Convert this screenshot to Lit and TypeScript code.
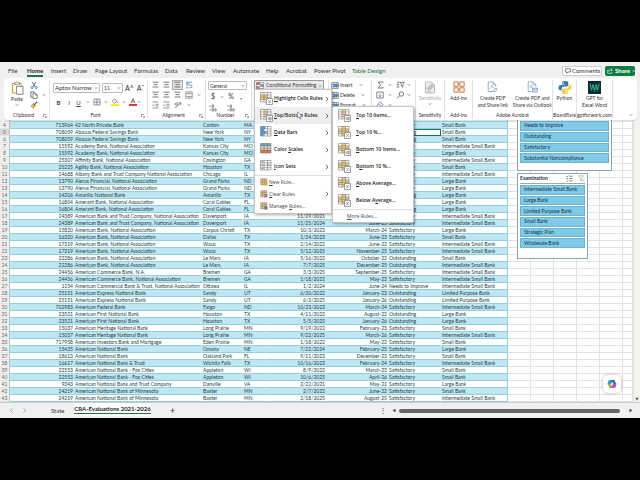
import { LitElement, html, css, svg, nothing, TemplateResult } from "lit";
import { customElement } from "lit/decorators.js";
import { classMap } from "lit/directives/class-map.js";

type Row = [string, string, string, string, string, string, string, string];

const I = "Intermediate Small Bank";
const L = "Large Bank";
const S = "Small Bank";
const P = "Limited Purpose Bank";
const SAT = "Satisfactory";
const OUT = "Outstanding";

const FIRST_ROW = 3;
const ROWS: Row[] = [
  ["8709", "1st Summit Bank", "Johnstown", "PA", "", "", SAT, S],
  ["713964", "42 North Private Bank", "Canton", "MA", "", "", SAT, S],
  ["708059", "Abacus Federal Savings Bank", "New York", "NY", "", "", OUT, S],
  ["708059", "Abacus Federal Savings Bank", "New York", "NY", "", "", OUT, S],
  ["15592", "Academy Bank, National Association", "Kansas City", "MO", "", "", SAT, I],
  ["15592", "Academy Bank, National Association", "Kansas City", "MO", "", "", SAT, L],
  ["25307", "Affinity Bank, National Association", "Covington", "GA", "", "", SAT, I],
  ["25225", "Agility Bank, National Association", "Houston", "TX", "", "", SAT, S],
  ["14688", "Albany Bank and Trust Company National Association", "Chicago", "IL", "", "", SAT, I],
  ["13790", "Alerus Financial, National Association", "Grand Forks", "ND", "", "", SAT, L],
  ["13790", "Alerus Financial, National Association", "Grand Forks", "ND", "", "", SAT, L],
  ["14206", "Amarillo National Bank", "Amarillo", "TX", "", "", OUT, L],
  ["16804", "Amerant Bank, National Association", "Coral Gables", "FL", "", "", SAT, L],
  ["16804", "Amerant Bank, National Association", "Coral Gables", "FL", "", "", OUT, L],
  ["24389", "American Bank and Trust Company, National Association", "Davenport", "IA", "11/29/2021", "", SAT, I],
  ["24389", "American Bank and Trust Company, National Association", "Davenport", "IA", "11/25/2024", "June-25", SAT, I],
  ["15820", "American Bank, National Association", "Corpus Christi", "TX", "10/3/2023", "March-24", SAT, L],
  ["16320", "American Bank, National Association", "Dallas", "TX", "1/24/2023", "June-23", SAT, S],
  ["17319", "American Bank, National Association", "Waco", "TX", "2/14/2022", "June-22", SAT, I],
  ["17319", "American Bank, National Association", "Waco", "TX", "5/12/2025", "November-25", SAT, I],
  ["22286", "American Bank, National Association", "Le Mars", "IA", "5/16/2022", "October-22", OUT, S],
  ["22286", "American Bank, National Association", "Le Mars", "IA", "7/7/2025", "December-25", OUT, I],
  ["24456", "American Commerce Bank, N.A.", "Bremen", "GA", "3/3/2025", "September-25", SAT, I],
  ["24456", "American Commerce Bank, National Association", "Bremen", "GA", "1/18/2022", "May-22", SAT, I],
  ["1154", "American Commercial Bank & Trust, National Association", "Ottawa", "IL", "1/2/2024", "June-24", "Needs to Improve", I],
  ["25151", "American Express National Bank", "Sandy", "UT", "6/20/2022", "January-23", OUT, P],
  ["25151", "American Express National Bank", "Sandy", "UT", "6/2/2025", "January-26", OUT, P],
  ["702983", "American Federal Bank", "Fargo", "ND", "10/23/2023", "March-24", SAT, I],
  ["23521", "American First National Bank", "Houston", "TX", "4/11/2022", "August-22", OUT, L],
  ["23521", "American First National Bank", "Houston", "TX", "5/5/2025", "January-26", OUT, L],
  ["15037", "American Heritage National Bank", "Long Prairie", "MN", "9/19/2022", "February-23", SAT, S],
  ["15037", "American Heritage National Bank", "Long Prairie", "MN", "9/22/2025", "March-26", SAT, I],
  ["717958", "American Investors Bank and Mortgage", "Eden Prairie", "MN", "1/18/2022", "May-22", SAT, S],
  ["15435", "American National Bank", "Omaha", "NE", "7/22/2024", "February-25", SAT, L],
  ["18613", "American National Bank", "Oakland Park", "FL", "9/11/2023", "December-23", SAT, S],
  ["16617", "American National Bank & Trust", "Wichita Falls", "TX", "10/16/2023", "February-24", SAT, I],
  ["22553", "American National Bank - Fox Cities", "Appleton", "WI", "8/9/2022", "March-23", SAT, S],
  ["22553", "American National Bank - Fox Cities", "Appleton", "WI", "10/6/2025", "April-26", SAT, S],
  ["9343", "American National Bank and Trust Company", "Danville", "VA", "2/22/2021", "May-21", SAT, L],
  ["24219", "American National Bank of Minnesota", "Baxter", "MN", "2/7/2022", "June-22", SAT, S],
  ["24219", "American National Bank of Minnesota", "Baxter", "MN", "2/18/2025", "August-25", SAT, I],
];

const TABS = ["File", "Home", "Insert", "Draw", "Page Layout", "Formulas", "Data", "Review", "View", "Automate", "Help", "Acrobat", "Power Pivot", "Table Design"];

/* ---------- icons ---------- */
const icon = (w: number, h: number, body: unknown, cls = "") =>
  html`<svg class="ic ${cls}" width=${w} height=${h} viewBox="0 0 ${w} ${h}" fill="none" aria-hidden="true">${body}</svg>`;

const chev = () => icon(4, 4, svg`<path d="M.8 1.3 2 2.6 3.2 1.3" stroke="#666" stroke-width=".7"/>`);
const launcher = () => icon(4, 4, svg`<path d="M.5 3V.5H3M1.8 1.8 3.5 3.5M3.6 2v1.6H2" stroke="#666" stroke-width=".6"/>`);
const arrow = () => icon(4, 6, svg`<path d="M1 .8 3 3 1 5.2" stroke="#444" stroke-width=".8"/>`, "arrow");

const paste = icon(13, 14, svg`<path d="M4 2.5H1.5v9.5H5M8 2.5h2.2V5" stroke="#e0a030" stroke-width="1.1"/><path d="M3.5 3.4V1.6h1.3a1.2 1.2 0 0 1 2.3 0h1.3v1.8z" fill="#fff" stroke="#666" stroke-width=".7"/><path d="M5.6 5.4h6.4v7.9H5.6z" fill="#fff" stroke="#666" stroke-width=".8"/>`);
const cut = icon(8, 8, svg`<path d="M2.2.8 5.2 5.6M5.8.8 2.8 5.6" stroke="#555" stroke-width=".8"/><circle cx="2" cy="6.4" r="1.1" stroke="#2b7cc0" stroke-width=".8"/><circle cx="6" cy="6.4" r="1.1" stroke="#2b7cc0" stroke-width=".8"/>`);
const copy = icon(8, 8, svg`<path d="M2.6 6.2H.9V.8h3.3v1" stroke="#555" stroke-width=".8"/><path d="M3 2.2h2.6l1.6 1.6v3.6H3zM5.4 2.3v1.7h1.7" stroke="#555" stroke-width=".7"/>`);
const brush = icon(8, 8, svg`<path d="M7 .8 4.8 3.2" stroke="#555" stroke-width="1.2"/><path d="M3.4 2.4 5.6 4.6" stroke="#444" stroke-width="1"/><path d="M3 3 .8 5.2 3.4 7.4 5.2 5z" fill="#eab04a" stroke="#b97f1d" stroke-width=".5"/>`);
const border = icon(8, 8, svg`<path d="M1 1h6v6H1zM4 1v6M1 4h6" stroke="#666" stroke-width=".7"/>`);
const fill = icon(8, 8, svg`<path d="M3.5.8 6 3.3 3.6 5.2 1.4 3.2z" stroke="#555" stroke-width=".7"/><path d="M6.8 3.6v1" stroke="#2b7cc0" stroke-width=".8"/><path d="M0 6h8v2H0z" fill="#f6ef1c"/>`);
const fontColor = icon(8, 8, svg`<path d="M2 5.2 4 .6 6 5.2M2.8 3.7h2.4" stroke="#555" stroke-width=".8"/><path d="M0 6h8v2H0z" fill="#d93636"/>`);
const lines = (a: number[], c = "#555") => icon(7, 8, svg`${a.map((w, i) => svg`<path d="M${(7 - w) / 2} ${1.2 + i * 2.4}h${w}" stroke=${c} stroke-width=".8"/>`)}`);
const indent = icon(7, 8, svg`<path d="M.5 1h6M3.5 3.3h3M3.5 5h3M.5 7h6" stroke="#666" stroke-width=".7"/><path d="M.5 4.2h2" stroke="#2b7cc0" stroke-width=".8"/>`);
const wrap = icon(8, 8, svg`<path d="M1 1.2h6M1 6.8h2.4M1 4h4.6a1.3 1.3 0 0 1 0 2.7H4.6" stroke="#3a88a8" stroke-width=".8"/><path d="M1 2.6h3" stroke="#666" stroke-width=".6"/>`);
const merge = icon(8, 8, svg`<path d="M.8.8h6.4v6.4H.8zM.8 2.6h6.4M.8 5.4h6.4M4 .8v1.8M4 5.4v1.8" stroke="#666" stroke-width=".6"/>`);
const orient = icon(8, 8, svg`<path d="M1 7 6.6 2M6.8 4V1.8H4.6" stroke="#555" stroke-width=".7"/><circle cx="2.4" cy="3" r="1.2" stroke="#555" stroke-width=".7"/>`);
const decimals = icon(8, 8, svg`<path d="M1 1.2v2M3 1h1.6v2.4H3zM3 4.8h1.6v2.2H3zM5.8 4.8h1.4v2.2H5.8z" stroke="#555" stroke-width=".6"/><path d="M.6 5.9h1.6" stroke="#2b7cc0" stroke-width=".8"/>`);
const cells = icon(8, 7, svg`<path d="M.6.6h6.8v5.8H.6zM.6 2.5h6.8M.6 4.5h6.8M3 .6v5.8M5.3.6v5.8" stroke="#555" stroke-width=".6"/><path d="M2.5 2.4h5v2.2h-5z" fill="#3a93cf"/>`);
const sigma = icon(7, 8, svg`<path d="M6 1.8V1H1.2L3.6 4 1.2 7H6v-.9" stroke="#555" stroke-width=".8"/>`);
const fillDown = icon(8, 8, svg`<path d="M.8 1h6.4v6H.8z" stroke="#555" stroke-width=".7"/><path d="M4 2.2v3.4M2.7 4.4 4 5.8l1.3-1.4" stroke="#2b7cc0" stroke-width=".7"/>`);
const eraser = icon(8, 8, svg`<path d="M4.4 1 7 3.6 3.8 6.8H2.6L.9 5z" stroke="#9c4fb5" stroke-width=".8"/><path d="M2.5 3 5 5.5" stroke="#9c4fb5" stroke-width=".7"/>`);
const sort = icon(9, 8, svg`<path d="M.8 1h2.4L.8 3.6h2.4M1 6.9 2 4.6l1 2.3" stroke="#555" stroke-width=".6"/><path d="M4 1.4h4.4L6.8 3.4v2.8l-1.2-.8v-2z" stroke="#555" stroke-width=".7"/>`);
const find = icon(9, 8, svg`<circle cx="5.4" cy="3" r="2.2" stroke="#555" stroke-width=".8"/><path d="M3.7 4.6 1.2 7.2" stroke="#555" stroke-width=".9"/>`);
const condIcon = icon(8, 7, svg`<path d="M.5.5h7v6h-7z" fill="#fff" stroke="#777" stroke-width=".6"/><path d="M.6.6h3.2v2H.6zM.6 4.4h2.2v2H.6z" fill="#d9534f"/><path d="M4.6 2.6h2.8v1.8H4.6z" fill="#4a93cf"/><path d="M.5 2.5h7M.5 4.5h7M4 .5v6" stroke="#777" stroke-width=".5"/>`);
const sensitivity = icon(12, 13, svg`<path d="M1.5 1h6l3 3v8h-9z" fill="#eee" stroke="#b5b5b5" stroke-width=".9"/><path d="M3 7.5 7.8 2.6l2.2 2.2-4.8 5z" fill="#c4c4c4" stroke="#a5a5a5" stroke-width=".5"/><path d="M2.6 11h5" stroke="#b5b5b5" stroke-width=".8"/>`);
const addins = icon(12, 13, svg`<path d="M.9.9h4.4v4.4H.9zM6.8.9h4.4v4.4H6.800zM.9 6.8h4.4v4.4H.9zM6.8 6.8h4.4v4.4H6.8z" fill="#fdf4ee" stroke="#c8703f" stroke-width=".9"/>`);
const pdfLink = icon(11, 13, svg`<path d="M6.6 10.5H1.2V1h5l2.6 2.6v2M6 1.2v2.6h2.6" stroke="#7d9cb8" stroke-width=".8"/><path d="M3 7.5c1.6-1.6 2-3 1.6-3.2s-.6 1.6 2.6 2.6" stroke="#7d9cb8" stroke-width=".6"/><path d="M6.5 9.5 9 7l1.3 1.3-2.6 2.6z" stroke="#5b8db8" stroke-width=".7"/>`);
const pdfMail = icon(11, 13, svg`<path d="M4.8 10.5H1.2V1h5l2.6 2.6v2.2M6 1.2v2.6h2.6" stroke="#7d9cb8" stroke-width=".8"/><circle cx="4" cy="5.4" r="1.2" stroke="#7d9cb8" stroke-width=".6"/><path d="M5.6 7.2h4.8v3.8H5.6zM5.6 7.3l2.4 2 2.4-2" fill="#eef5fb" stroke="#5b8db8" stroke-width=".7"/>`);
const python = icon(14, 13, svg`<path d="M7 0C4.3 0 4.2 1 4.2 1.800V3.500h3v.6H2.800C1.300 4.100.5 5 .5 6.700s.8 2.500 1.800 2.500h1.400V7.500c0-1.200.9-2 2-2h2.900c1 0 1.700-.8 1.700-1.700v-2C10.300.7 9.300 0 7 0z" fill="#3776ab"/><path d="M7.200 13c2.700 0 2.800-1 2.800-1.800V9.500H7v-.6h4.400c1.500 0 2.200-.9 2.200-2.600s-.8-2.500-1.800-2.500h-1.300v1.700c0 1.200-.9 2-2 2H5.600c-1 0-1.700.8-1.700 1.700v2c0 1.100 1 1.800 3.300 1.800z" fill="#f7cf45"/><circle cx="5.500" cy="1.800" r=".6" fill="#fff"/><circle cx="8.700" cy="11.200" r=".6" fill="#fff"/>`);
const gpt = icon(13, 13, svg`<path d="M0 0h13v13H0z" fill="#0b2c33"/><path d="M2 2.500 3.600 9 5 3.500l1.600 6L8.200 3.500 9.600 9l1.600-6.500" stroke="#2fc79a" stroke-width=".9"/><path d="M2.500 5 4 10.500M5.200 5.500l1.500 5.500M8.200 6l1 4.500" stroke="#1c8f86" stroke-width=".7"/>`);
const comment = icon(6, 6, svg`<path d="M.6.8h4.800v3.200H2.800L1.600 5.300V4H.6z" stroke="#333" stroke-width=".6"/>`);
const share = icon(6, 6, svg`<path d="M2 2.200H.7v3.100h4V4M2 3.800C2 2.400 3 1.800 5 1.800M3.800.6 5.200 1.800 3.800 3" stroke="#fff" stroke-width=".6"/>`);

const GRID = "M.5.5h10.500v9.500H.5zM.5 2.900h10.500M.5 5.300h10.500M.5 7.700h10.500M4 .5v9.500M7.500.5v9.500";
const tableIcon = (inner: unknown, badge?: unknown) =>
  icon(13, 13, svg`<path d="M.5.5h10.500v9.500H.5z" fill="#fff"/>${inner}<path d=${GRID} stroke="#777" stroke-width=".6"/>${
    badge ? svg`<path d="M6.500 6.500h6v6h-6z" fill="#fff" stroke="#777" stroke-width=".7"/>${badge}` : nothing}`);
const amber = (d: string) => svg`<path d=${d} fill="#f5cd78"/>`;
const ten = svg`<path d="M8.200 8.300v2.600M9.700 8.300h1.400v2.600H9.700z" stroke="#555" stroke-width=".6"/>`;
const pct = svg`<path d="M11 8 8.200 11.200M8.100 8.400h.8M10.400 10.800h.8" stroke="#555" stroke-width=".6"/>`;
const avg = svg`<path d="m8.300 8.200 2.400 2.800M10.900 8.200 8.300 11.200" stroke="#555" stroke-width=".6"/>`;
const UP = "M3.200 3.200 5.700.8 8.300 3.200H7v5H4.500v-5z";
const ALL = "M.5 2.900h3.500v4.800H.5zM4 .5h3.500v9.500H4zM7.500 2.900H11v3H7.500z";

const small = (c: string) => icon(8, 8, svg`<path d="M.8.800h6v6h-6z" fill="#fbe2b0"/><path d="M.8.800h6v6h-6zM.8 2.800h6M.8 4.800h6M2.800.800v6M4.800.800v6" stroke="#8a6f4c" stroke-width=".6"/><path d="M4.400 4.400h3v3h-3z" fill=${c}/>`);

/* A label whose letter at index k carries the access-key underline. */
const key = (t: string, k: number): TemplateResult => html`<span>${t.slice(0, k)}<u>${t[k]}</u>${t.slice(k + 1)}</span>`;

@customElement("app-root")
export class AppRoot extends LitElement {
  static styles = css`
    :host {
      display: flex;
      flex-direction: column;
      min-height: 100vh;
      box-sizing: border-box;
      padding: 62px 0;
      background: #000;
      color: #333;
      font: 6px/8px "Open Sans", "Noto Sans", sans-serif;
      overflow: hidden;
    }
    * { box-sizing: border-box; }
    button, select, input {
      font: inherit;
      color: inherit;
      background: none;
      border: 0;
      padding: 0;
      margin: 0;
      border-radius: 0;
      appearance: none;
      white-space: nowrap;
    }
    .ic { display: block; flex: none; }
    .row { display: flex; align-items: center; }
    .window { flex: 1; display: flex; flex-direction: column; background: #f0f0f0; position: relative; }

    .tabs { display: flex; align-items: center; height: 16px; padding: 2px 5px 0 8px; font-family: Lato, sans-serif; }
    .tablist { display: grid; flex: 1; grid-template-columns: 19px 24px 22px 22px 39px 31px 21px 26px 21px 33px 20px 28px 38px 1fr; }
    .tab { text-align: left; height: 11px; justify-self: start; border-bottom: 2px solid transparent; line-height: 9px; }
    .tab.on { font-weight: 700; border-color: #217346; color: #222; }
    .tab.ctx { color: #217346; }
    .pill { display: flex; align-items: center; gap: 1px; height: 10px; border-radius: 2px; padding: 0 2px; }
    .comments { background: #fff; border: 1px solid #ccc; width: 40px; margin-right: 3px; }
    .share { background: #107c41; color: #fff; font-weight: 700; width: 30px; gap: 2px; }

    .ribbon {
      display: grid;
      grid-template-columns: 46px 98px 58px 46px 77px 43px 44px 29px 28px 80px 24px 36px 1fr;
      height: 42px;
      margin: 0 3px 0 4px;
      background: #fff;
      border-radius: 4px;
      font: 5px/7px Lato, sans-serif;
      position: relative;
      z-index: 2;
      box-shadow: 0 1px 1px #0002;
    }
    .group { display: flex; flex-direction: column; border-right: 1px solid #e2e2e2; margin-top: 2px; min-width: 0; height: 39px; }
    .group:last-child { border: 0; }
    .body { height: 32px; display: flex; }
    .label { display: flex; justify-content: center; align-items: center; height: 7px; white-space: nowrap; }
    .label > span { flex: 1; text-align: center; }
    .label .ic { margin-right: 2px; }
    .big { display: flex; flex-direction: column; align-items: center; flex: 1; line-height: 7px; white-space: nowrap; text-align: center; padding-top: 1px; }
    .big .ic:first-child { margin-bottom: 1px; }
    .big.off { color: #aaa; }
    .stack { display: grid; grid-auto-rows: 10px; align-items: center; }
    .paste { flex: none; width: 26px; }
    .clip { flex: 1; grid-template-columns: 12px 1fr; }
    .font { flex: 1; display: flex; flex-direction: column; gap: 4px; padding: 3px 6px 0 3px; }
    .fields { gap: 2px; }
    .box { display: flex; align-items: center; border: 1px solid #bbb; border-radius: 1px; height: 10px; background: #fff; padding: 0 1px; }
    .box select { flex: 1; min-width: 0; width: 0; height: 8px; line-height: 8px; }
    .box.face { width: 47px; font-size: 6px; }
    .box.size { width: 21px; }
    .box.format { width: 39px; height: 9px; }
    .grow { font-size: 7px; width: 9px; }
    .fmt { display: grid; grid-template-columns: 11px 10px 9px 9px 9px 9px 9px 9px 9px 4px; align-items: center; justify-items: center; height: 10px; font-size: 6px; }
    .align { flex: 1; grid-template-columns: 11px 11px 11px 11px 1fr; padding: 0 2px; justify-items: center; }
    .hot { background: #e2e2e2; border: 1px solid #aaa; padding: 0 1px; }
    .num { padding: 1px 2px 0; flex: 1; display: flex; flex-direction: column; gap: 2px; }
    .nums { display: grid; grid-template-columns: 10px 8px 10px 10px; align-items: center; justify-items: center; height: 9px; font-size: 7px; }
    .styles { padding: 0 2px; flex: 1; }
    .cond { display: flex; align-items: center; gap: 2px; height: 11px; width: 70px; border: 1px solid #999; border-radius: 1px; background: #e9e9e9; padding: 0 1px; }
    .cell { display: flex; align-items: center; gap: 1px; }
    .cell .ic:last-child { margin-left: 5px; }
    .cellpad { padding-left: 2px; }
    .edit { grid-template-columns: 10px 10px 11px 6px; padding-left: 3px; align-items: center; justify-items: center; }
    .collapse { display: flex; align-items: flex-end; justify-content: flex-end; padding: 0 4px 3px; }

    .sheet { display: flex; flex: 1; overflow: hidden; position: relative; background: #fff; }
    .grid { flex: 1; overflow: hidden; height: 282px; }
    table { border-collapse: separate; border-spacing: 0; table-layout: fixed; width: 100%; margin-top: -5px; font: 5px/6px Lato, sans-serif; color: #2a3a3f; }
    td, th { height: 7px; padding: 0 1px; white-space: nowrap; border-bottom: 1px solid #e3e3e3; border-right: 1px solid #e3e3e3; font-weight: 400; }
    th { background: #f0f0f0; color: #666; text-align: center; padding: 0; border-right-color: #bbb; }
    th.cur { background: #d8d8d8; }
    td.d { border-bottom-color: #8fd0df; border-right-color: transparent; }
    tr.band td.d { background: #bee7f2; }
    td.n { text-align: right; padding-right: 0; }
    td.end { border-right-color: #8fd0df; }
    td.sel { outline: 1px solid #217346; outline-offset: -1px; }
    .c0 { width: 10px; } .c1 { width: 64px; } .c2 { width: 128px; } .c3 { width: 41px; } .c4 { width: 23px; }
    .c5 { width: 60px; } .c6 { width: 62px; } .c7 { width: 53px; } .c8 { width: 67px; } .c9 { width: 23px; }
    .vscroll { width: 7px; background: #f2f4f0; display: flex; align-items: flex-end; justify-content: center; border-left: 1px solid #e3e3e3; padding-bottom: 1px; }

    .slicer { position: absolute; left: 517px; background: #fff; border: 1px solid #8fa3ab; padding: 0 2px; font: 5px/9px Lato, sans-serif; color: #173039; }
    .rating { top: -10px; width: 95px; height: 61px; padding-top: 10px; }
    .exam { top: 53px; width: 71px; height: 86px; }
    .shead { display: flex; align-items: center; gap: 5px; height: 10px; border-bottom: 1px solid #9aa; margin-bottom: 1px; font-weight: 700; }
    .shead span { flex: 1; }
    .opts { display: grid; grid-auto-rows: 1fr; gap: 1px; }
    .rating .opts { height: 42px; }
    .exam .opts { height: 63px; }
    .opt { background: #80cae9; border: 1px solid #6bb3d0; text-align: left; padding-left: 3px; line-height: 7px; }
    .copilot { position: absolute; right: 19px; bottom: 9px; width: 18px; height: 18px; display: grid; place-items: center; background: #fff; border-radius: 5px; box-shadow: 0 0 3px #0005; }

    .foot { display: flex; align-items: center; height: 16px; border-top: 1px solid #ccc; font: 6px/9px Lato, sans-serif; padding-right: 7px; }
    .nav { display: flex; gap: 8px; padding-left: 9px; width: 51px; }
    .sheettab { width: 23px; text-align: left; }
    .sheettab.on { width: 77px; padding: 0 3px; background: #fff; height: 13px; font-weight: 700; color: #222; margin-right: 18px; display: flex; justify-content: center; align-self: flex-start; }
    .sheettab.on span { border-bottom: 1px solid #217346; height: 11px; line-height: 11px; }
    .plus { font-size: 9px; width: 7px; }
    .dots { margin-left: auto; padding: 0 5px 0 0; font-size: 8px; }
    .hscroll { display: flex; align-items: center; gap: 3px; width: 38%; }
    .thumb { flex: 1; height: 4px; border-radius: 2px; background: #666; margin-right: 6px; }

    .menu { position: absolute; z-index: 3; background: #fff; border: 1px solid #c4c4c4; box-shadow: 1px 1px 3px #0005; font: 600 5px/7px "Open Sans", sans-serif; color: #222; display: flex; flex-direction: column; }
    .main { left: 254px; top: 27px; width: 78px; padding-bottom: 1px; }
    .sub { left: 332px; top: 44px; width: 82px; border-radius: 2px; }
    .item { display: flex; align-items: center; gap: 1px; height: 17px; padding: 0 2px 0 5px; text-align: left; }
    .item span { flex: 1; }
    .item.hover { background: #efefef; }
    .sub .item { gap: 5px; }
    .item.sm { height: 12px; font-weight: 400; gap: 1px; color: #444; }
    hr { border: 0; border-top: 1px solid #ddd; margin: 0; width: 100%; }
    .sub .item.more { padding-left: 14px; }
    u { text-decoration-thickness: 1px; text-underline-offset: 1px; }
    .pointer { position: absolute; z-index: 4; left: 297px; top: 49px; }
  `;

  private big(ic: unknown, text: string[], cls = "") {
    return html`<button class="big ${cls}">${ic}${text.map((l) => html`<span>${l}</span>`)}</button>`;
  }

  private group(body: unknown, label: string, launch = false) {
    return html`<section class="group"><div class="body">${body}</div>
      <div class="label"><span>${label}</span>${launch ? launcher() : nothing}</div></section>`;
  }

  private ribbon() {
    const b = (x: unknown, cls = "") => html`<button class=${cls}>${x}</button>`;
    return html`<div class="ribbon">
      ${this.group(html`
        <button class="big paste">${paste}<span>Paste</span>${chev()}</button>
        <div class="stack clip">${b(cut)}<i></i>${b(copy)}${chev()}${b(brush)}<i></i></div>`, "Clipboard", true)}
      ${this.group(html`<div class="font">
        <div class="row fields">
          <label class="box face"><select aria-label="Font"><option>Aptos Narrow</option></select>${chev()}</label>
          <label class="box size"><select aria-label="Font size"><option>11</option></select>${chev()}</label>
          <button class="grow">A^</button><button class="grow">Aˇ</button>
        </div>
        <div class="fmt"><button><b>B</b></button><button><i>I</i></button><button><u>U</u></button>${chev()}${b(border)}${chev()}${b(fill)}${chev()}${b(fontColor)}${chev()}</div>
      </div>`, "Font", true)}
      ${this.group(html`<div class="stack align">
        ${b(lines([6, 4, 6]))}${b(lines([6, 4, 6]))}${b(lines([6, 4, 6]), "hot")}${b(wrap)}<i></i>
        ${b(lines([6, 4, 6]))}${b(lines([6, 4, 6]))}${b(lines([6, 4, 6]))}${b(merge)}${chev()}
        ${b(indent)}${b(indent)}${b(orient)}${chev()}<i></i></div>`, "Alignment", true)}
      ${this.group(html`<div class="num">
        <label class="box format"><select aria-label="Number format"><option>General</option></select>${chev()}</label>
        <div class="nums"><button>$</button>${chev()}<button>%</button><button><b>,</b></button></div>
        <div class="nums">${b(decimals)}<i></i>${b(decimals)}</div></div>`, "Number", true)}
      ${this.group(html`<div class="styles"><button class="cond">${condIcon}<span>Conditional Formatting</span>${chev()}</button></div>`, "")}
      ${this.group(html`<div class="stack cellpad">${["Insert", "Delete", "Format"].map((t) => html`<button class="cell">${cells}<span>${t}</span>${chev()}</button>`)}</div>`, "")}
      ${this.group(html`<div class="stack edit">${b(sigma)}${chev()}${b(sort)}${chev()}${b(fillDown)}${chev()}${b(find)}${chev()}${b(eraser)}${chev()}</div>`, "")}
      ${this.group(html`<button class="big off">${sensitivity}<span>Sensitivity</span>${chev()}</button>`, "Sensitivity")}
      ${this.group(this.big(addins, ["Add-ins"]), "Add-ins")}
      ${this.group(html`${this.big(pdfLink, ["Create PDF", "and Share link"])}${this.big(pdfMail, ["Create PDF and", "Share via Outlook"])}`, "Adobe Acrobat")}
      ${this.group(this.big(python, ["Python"]), "Boardflare")}
      ${this.group(this.big(gpt, ["GPT for", "Excel Word"]), "gptforwork.com")}
      <button class="collapse" aria-label="Collapse ribbon">${chev()}</button>
    </div>`;
  }

  private table() {
    return html`<table>
      <colgroup>${[0, 1, 2, 3, 4, 5, 6, 7, 8, 9, 9, 9, 9, 9].map((c) => html`<col class="c${c}">`)}<col></colgroup>
      <tbody>${ROWS.map((r, i) => {
        const n = i + FIRST_ROW;
        return html`<tr class=${classMap({ band: n % 2 === 0 })}>
          <th scope="row" class=${classMap({ cur: n === 5 })}>${n}</th>
          ${r.map((v, c) => html`<td class=${classMap({ d: true, n: c === 0 || c === 4 || c === 5, end: c === 7, sel: n === 5 && c === 6 })}>${v}</td>`)}
          <td></td><td></td><td></td><td></td><td></td><td></td></tr>`;
      })}</tbody></table>`;
  }

  private slicers() {
    const opts = (a: string[]) => html`<div class="opts">${a.map((t) => html`<button class="opt">${t}</button>`)}</div>`;
    return html`
      <div class="slicer rating">${opts(["Needs to Improve", "Outstanding", "Satisfactory", "Substantial Noncompliance"])}</div>
      <div class="slicer exam"><div class="shead"><span>Examination</span>
        ${icon(7, 7, svg`<path d="M3.200 1.200h3.500M3.200 3.500h3.500M3.200 5.800h3.500M.4 1.200l.7.700L2.200.6M.4 3.500l.7.700 1.100-1.300M.4 5.800l.7.700 1.100-1.300" stroke="#444" stroke-width=".6"/>`)}
        ${icon(7, 7, svg`<path d="M.6.8h5L3.800 3.300v2.900l-1.200-.8V3.300zM4.700 4.400l1.800 1.800M6.500 4.400 4.700 6.200" stroke="#999" stroke-width=".6"/>`)}</div>
        ${opts(["Intermediate Small Bank", "Large Bank", "Limited Purpose Bank", "Small Bank", "Strategic Plan", "Wholesale Bank"])}</div>
      <button class="copilot" aria-label="Copilot">${icon(10, 10, svg`
        <path d="M3 1h3L5 3.600 4 6H1.600C.5 6 .5 4.400.9 3.200 1.300 1.800 1.900 1 3 1z" fill="#2b9bd0"/>
        <path d="M5 1h1.600c1 0 1.200.9 1.600 2.200H4.600z" fill="#2457b5"/>
        <path d="M7 9H4l1-2.600L6 4h2.400c1.100 0 1.100 1.600.7 2.800C8.700 8.200 8.100 9 7 9z" fill="#b85ab8"/>
        <path d="M5 9H3.400c-1 0-1.200-.9-1.600-2.200h3.600z" fill="#e8743c"/>
        <path d="M1 4.800h3L3.600 6.800H1.800C.9 6.600.7 5.700 1 4.800z" fill="#6cc04a"/>
        <path d="M6 3.200h2.200c1 .2 1.200.9.900 1.900H5.800z" fill="#5a55c8"/>
        <path d="M4.600 4h1.400L5.400 6H4z" fill="#fff"/>`)}</button>`;
  }

  private menus() {
    const ne = (d: string, badge: unknown) => tableIcon(amber(d), badge);
    return html`
      <div class="menu main" role="menu">
        <button class="item" role="menuitem">${ne("M.5 2.900h7v4.800h-7z", avg)}${key("Highlight Cells Rules", 0)}${arrow()}</button>
        <button class="item hover" role="menuitem">${ne(UP, ten)}${key("Top/Bottom Rules", 0)}${arrow()}</button>
        <button class="item" role="menuitem">${tableIcon(svg`<path d="M.5.5h5v2.400h-5zM.5 2.900h3.500v2.400H.5zM.5 5.300h6v2.400h-6zM.5 7.700h3v2.300h-3z" fill="#4aa3df"/>`)}${key("Data Bars", 0)}${arrow()}</button>
        <button class="item" role="menuitem">${tableIcon(svg`<path d="M.5.5H11v3H.5z" fill="#5aa9df"/><path d="M.5 3.500H11v3H.5z" fill="#f7e7a5"/><path d="M.5 6.500H11V10H.5z" fill="#ea7458"/>`)}${key("Color Scales", 6)}${arrow()}</button>
        <button class="item" role="menuitem">${tableIcon(svg`<circle cx="2.200" cy="1.800" r=".8" fill="#888"/><circle cx="2.200" cy="5" r=".8" fill="#888"/><circle cx="2.200" cy="8.500" r=".8" fill="#888"/><circle cx="8.800" cy="5" r=".8" fill="#888"/>`)}${key("Icon Sets", 0)}${arrow()}</button>
        <hr>
        <button class="item sm" role="menuitem">${small("#e2a23c")}${key("New Rule...", 0)}</button>
        <button class="item sm" role="menuitem">${small("#b26cc0")}${key("Clear Rules", 0)}${arrow()}</button>
        <button class="item sm" role="menuitem">${small("#4a78b8")}${key("Manage Rules...", 7)}</button>
      </div>
      <div class="menu sub" role="menu">
        <button class="item" role="menuitem">${ne(UP, ten)}${key("Top 10 Items...", 0)}</button>
        <button class="item" role="menuitem">${ne(ALL, pct)}${key("Top 10 %...", 0)}</button>
        <button class="item" role="menuitem">${ne(ALL, ten)}${key("Bottom 10 Items...", 0)}</button>
        <button class="item" role="menuitem">${ne(ALL, pct)}${key("Bottom 10 %...", 1)}</button>
        <button class="item" role="menuitem">${ne(ALL, avg)}${key("Above Average...", 0)}</button>
        <button class="item" role="menuitem">${ne(ALL, avg)}${key("Below Average...", 7)}</button>
        <hr>
        <button class="item sm more" role="menuitem">${key("More Rules...", 0)}</button>
      </div>
      ${icon(6, 9, svg`<path d="M.6.8v6.200l1.400-1.300 1 2.300 1-.5-1-2.200h1.900z" fill="#fff" stroke="#666" stroke-width=".6"/>`, "pointer")}`;
  }

  render() {
    return html`<main class="window">
      <header class="tabs">
        <nav class="tablist">${TABS.map((t, i) => html`<button class="tab ${i === 1 ? "on" : i === 13 ? "ctx" : ""}">${t}</button>`)}</nav>
        <button class="pill comments">${comment}<span>Comments</span></button>
        <button class="pill share">${share}<span>Share</span>${icon(4, 4, svg`<path d="M.8 1.300 2 2.600 3.200 1.300" stroke="#fff" stroke-width=".7"/>`)}</button>
      </header>
      ${this.ribbon()}
      <div class="sheet"><div class="grid">${this.table()}</div>
        <div class="vscroll">${icon(4, 4, svg`<path d="M.3.8h3.400L2 3.500z" fill="#555"/>`)}</div>
        ${this.slicers()}</div>
      <footer class="foot">
        <div class="nav">${icon(5, 7, svg`<path d="M3.500 1.500 1.500 3.500l2 2" stroke="#888" stroke-width=".7"/>`)}${icon(5, 7, svg`<path d="M1.500 1.500 3.500 3.500l-2 2" stroke="#888" stroke-width=".7"/>`)}</div>
        <button class="sheettab">State</button>
        <button class="sheettab on"><span>CRA-Evaluations 2021-2026</span></button>
        <button class="plus">+</button>
        <span class="dots">⋮</span>
        <div class="hscroll">${icon(4, 5, svg`<path d="M3.500.8v3.400L.6 2.500z" fill="#444"/>`)}<div class="thumb"></div>${icon(4, 5, svg`<path d="M.5.8v3.400l2.900-1.700z" fill="#444"/>`)}</div>
      </footer>
      ${this.menus()}
    </main>`;
  }
}
